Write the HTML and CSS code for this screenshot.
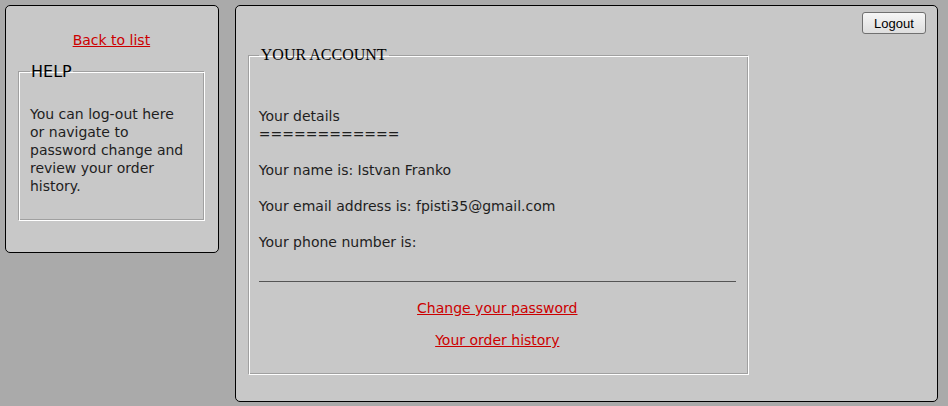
FILE: index.html
```html
<!DOCTYPE html>
<html>
<head>
<meta charset="utf-8">
<title>Your account</title>
<link rel="stylesheet" href="styles.css">
</head>
<body>
<div class="page">
  <aside class="side panel">
    <div class="back"><a href="#">Back to list</a></div>
    <fieldset class="box help">
      <legend class="help-legend">HELP</legend>
      <p class="help-text">You can log-out here or navigate to password change and review your order history.</p>
    </fieldset>
  </aside>
  <main class="main panel">
    <div class="topbar"><button class="logout" type="button">Logout</button></div>
    <fieldset class="box account">
      <legend class="account-legend">YOUR ACCOUNT</legend>
      <div class="details">
        Your details<br>
        ============<br>
        <br>
        Your name is: Istvan Franko<br>
        <br>
        Your email address is: fpisti35@gmail.com<br>
        <br>
        Your phone number is:<br>
        <br>
      </div>
      <hr class="rule">
      <div class="links">
        <a href="#">Change your password</a>
        <a href="#">Your order history</a>
      </div>
    </fieldset>
  </main>
</div>
</body>
</html>
```

FILE: styles.css
```css
html, body {
  margin: 0;
  padding: 0;
  background: #aaaaaa;
}
body {
  font-family: "DejaVu Sans", Verdana, sans-serif;
  font-size: 14px;
  line-height: 18px;
  color: #1e1e1e;
}
a {
  color: #cc0000;
  text-decoration: underline;
}
.page {
  display: flex;
  align-items: flex-start;
  gap: 16px;
  padding: 5px 10px 5px 5px;
}
.panel {
  background: #c8c8c8;
  border: 1px solid #000000;
  border-radius: 5px;
  box-sizing: border-box;
}
.side {
  width: 214px;
  height: 248px;
  padding: 25px 13px 0 12px;
}
.back {
  text-align: center;
}
.box {
  margin: 0;
  border: 1px solid;
  border-color: #a0a0a0 #ffffff #ffffff #a0a0a0;
  box-shadow: inset 1px 1px 0 #ffffff, inset -1px -1px 0 #a0a0a0;
}
.help {
  margin-top: 13px;
  height: 159px;
  box-sizing: border-box;
  padding: 0 14px 0 11px;
}
.help-legend {
  font-size: 16px;
  line-height: 19px;
  padding: 0 1px;
  color: #000000;
}
.help-text {
  margin: 24px 0 0 0;
}
.main {
  width: 704px;
  height: 397px;
  padding: 6px 11px 0 12px;
}
.topbar {
  display: flex;
  justify-content: flex-end;
}
.logout {
  font-family: "Liberation Sans", Arial, sans-serif;
  font-size: 13px;
  height: 22px;
  width: 64px;
  padding: 0;
  color: #000000;
  background: linear-gradient(#f6f6f6, #dedede);
  border: 1px solid #707070;
  border-radius: 3px;
}
.account {
  margin-top: 12px;
  width: 501px;
  height: 329px;
  box-sizing: border-box;
  padding: 0 12px 0 10px;
}
.account-legend {
  font-family: "Liberation Serif", "Times New Roman", serif;
  font-size: 16px;
  line-height: 18px;
  padding: 0 2px;
  color: #000000;
}
.details {
  margin-top: 43px;
}
.rule {
  margin: 12px 0 0 0;
  border: 0;
  border-top: 1px solid #555555;
  height: 0;
}
.links {
  display: flex;
  flex-direction: column;
  align-items: center;
  gap: 14px;
  margin-top: 17px;
}
```
